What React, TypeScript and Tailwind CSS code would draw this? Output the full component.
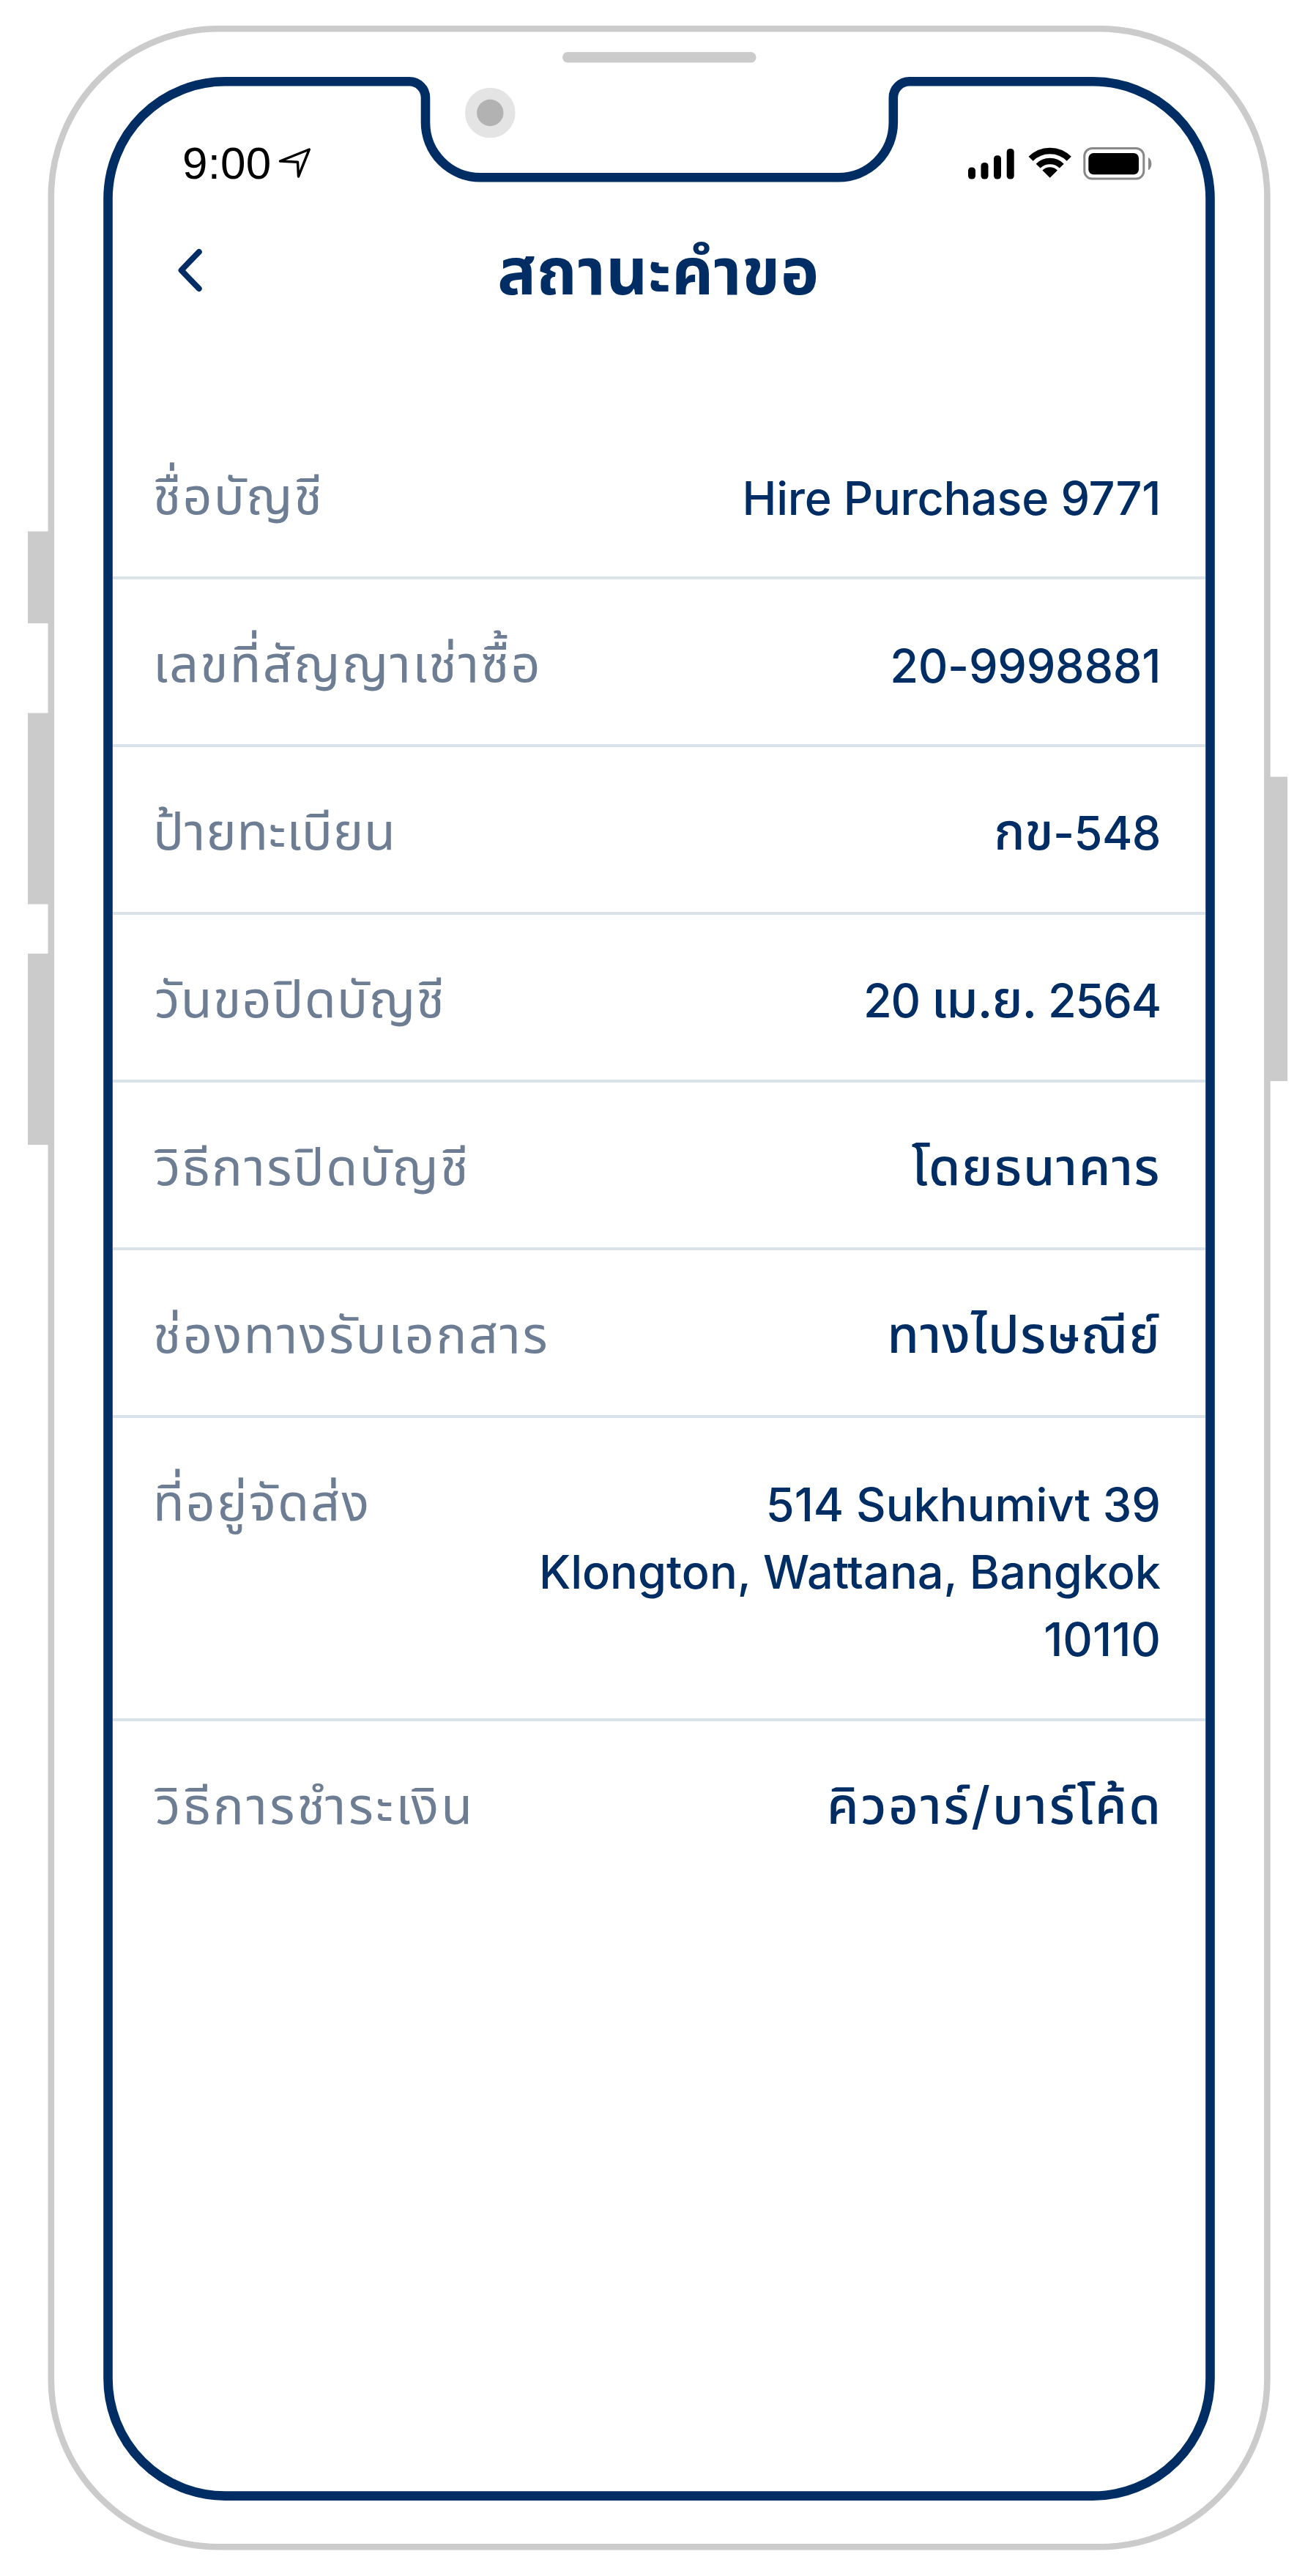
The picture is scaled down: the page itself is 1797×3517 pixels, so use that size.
import type { ReactNode } from "react";

type Row = { label: string; labelClass: string; value: ReactNode; valueClass: string; tall?: boolean };

const rows: Row[] = [
  { label: "ชื่อบัญชี", labelClass: "tracking-[2px]", value: "Hire Purchase 9771", valueClass: "relative top-px text-[63px] tracking-[-0.3px]" },
  { label: "เลขที่สัญญาเช่าซื้อ", labelClass: "tracking-[2.2px]", value: "20-9998881", valueClass: "relative top-px text-[63px] tracking-[-0.3px]" },
  {
    label: "ป้ายทะเบียน", labelClass: "tracking-[0.7px]",
    value: <><span className="text-[70px] leading-none">กข</span>-548</>, valueClass: "text-[63px] tracking-[-0.5px]",
  },
  {
    label: "วันขอปิดบัญชี", labelClass: "ml-[2px] tracking-[1.3px]",
    value: <>20 <span className="text-[70px] leading-none">เม.ย.</span> 2564</>, valueClass: "text-[63px] tracking-[-1.2px]",
  },
  { label: "วิธีการปิดบัญชี", labelClass: "ml-[3px] tracking-[2.3px]", value: "โดยธนาคาร", valueClass: "text-[70px] tracking-[1.6px]" },
  { label: "ช่องทางรับเอกสาร", labelClass: "tracking-[2.5px]", value: "ทางไปรษณีย์", valueClass: "text-[70px] tracking-[1.3px]" },
  {
    label: "ที่อยู่จัดส่ง", labelClass: "tracking-[2.1px]",
    value: <>514 Sukhumivt 39<br />Klongton, Wattana, Bangkok<br />10110</>, valueClass: "relative top-px text-[63px]", tall: true,
  },
  { label: "วิธีการชำระเงิน", labelClass: "ml-[3px] tracking-[3.3px]", value: "คิวอาร์/บาร์โค้ด", valueClass: "-mr-[3px] text-[70px] tracking-[2.9px]" },
];

function PhoneFrame() {
  return (
    <svg className="absolute inset-0" width="1797" height="3517" viewBox="0 0 1797 3517" fill="none">
      <g fill="#cbcbcb">
        <rect x="38" y="725.5" width="32" height="125.5" />
        <rect x="38" y="973.5" width="32" height="261" />
        <rect x="38" y="1302" width="32" height="261" />
        <rect x="1730" y="1060.5" width="28" height="415.5" />
        <rect x="768" y="71" width="264.5" height="14.5" rx="7.25" />
      </g>
      <rect x="69.8" y="39.3" width="1660.6" height="3438" rx="229" stroke="#cbcbcb" strokeWidth="8.6" />
      <circle cx="669.3" cy="154" r="34.3" fill="#e4e4e4" />
      <circle cx="669.3" cy="154" r="18.2" fill="#b2b2b2" />
      <path
        d="M307.5 111.3H559A22 22 0 0 1 581 133.3V167.3A75 75 0 0 0 656 242.3H1144.8A75 75 0 0 0 1219.8 167.3V133.3A22 22 0 0 1 1241.8 111.3H1492.5A160 160 0 0 1 1652.5 271.3V3247.6A160 160 0 0 1 1492.5 3407.6H307.5A160 160 0 0 1 147.5 3247.6V271.3A160 160 0 0 1 307.5 111.3Z"
        stroke="#002d64" strokeWidth="12.6"
      />
    </svg>
  );
}

function StatusBar() {
  return (
    <div className="flex h-[70px] items-center pl-[95px] pr-[73px]">
      <span className="w-[131px] font-['Liberation_Sans',Arial,sans-serif] text-[62px] leading-[70px] tracking-[0.2px] text-black">9:00</span>
      <svg width="46" height="46" viewBox="0 0 46 46" fill="none" stroke="#000" strokeWidth="3.4" strokeLinejoin="round">
        <path d="M42.3 4L2.5 20L26.5 21.2L27.5 41Z" />
      </svg>
      <svg className="ml-auto" width="65" height="46" viewBox="0 0 65 46">
        <rect x="1" y="28.5" width="10" height="16" rx="4.5" />
        <rect x="18.5" y="22" width="10" height="22.5" rx="4.5" />
        <rect x="36" y="12.3" width="10" height="32.2" rx="4.5" />
        <rect x="53.7" y="3" width="10" height="41.5" rx="4.5" />
      </svg>
      <svg className="ml-[17px]" width="61" height="46" viewBox="0 0 61 46" fill="none" stroke="#000">
        <path d="M4.6 16.8A36.8 36.8 0 0 1 56.8 16.8" strokeWidth="8.6" />
        <path d="M14.6 26.6A22.8 22.8 0 0 1 46.8 26.6" strokeWidth="8.4" />
        <path d="M20.4 32.6A14.3 14.3 0 0 1 41 32.6L30.7 42.8Z" fill="#000" stroke="none" />
      </svg>
      <svg className="ml-[14px]" width="95" height="46" viewBox="0 0 95 46">
        <rect x="2.8" y="2.5" width="81" height="41.6" rx="10.5" fill="none" stroke="#888" strokeWidth="3" />
        <rect x="8.3" y="9" width="68.7" height="29.3" rx="7" />
        <path d="M90 15C95.8 18 95.8 29.3 90 32.3Z" fill="#888" />
      </svg>
    </div>
  );
}

function Header() {
  return (
    <header className="mt-[62px] flex h-[100px] items-center text-[#002d64]">
      <button className="ml-[88px] -mr-[124px] -mt-[2px]">
        <svg width="34" height="60" viewBox="0 0 34 60" fill="none" stroke="currentColor" strokeWidth="8" strokeLinecap="round" strokeLinejoin="round">
          <path d="M29.7 5L5.6 30L29.7 55" />
        </svg>
      </button>
      <h1 className="flex-1 text-center text-[88px] font-bold leading-[100px] tracking-[0.7px]">สถานะคำขอ</h1>
    </header>
  );
}

export default function App() {
  return (
    <div className="relative h-[3517px] w-[1797px] bg-white font-['Inter','Noto_Sans_Thai','Noto_Sans',sans-serif]">
      <PhoneFrame />
      <div className="relative ml-[154px] flex w-[1492px] flex-col pt-[188px]">
        <StatusBar />
        <Header />
        <dl className="mt-[142px]">
          {rows.map((r) => (
            <div
              key={r.label}
              className={`flex items-baseline justify-between border-b-4 border-[#dbe3ea] pl-[55px] pr-[61px] pt-[69px] last:border-b-0 ${r.tall ? "h-[414px]" : "h-[229px]"}`}
            >
              <dt className={`whitespace-nowrap text-[70px] leading-[92px] text-[#6d7d93] ${r.labelClass}`}>{r.label}</dt>
              <dd className={`whitespace-nowrap text-right font-medium leading-[92px] text-[#002d64] ${r.valueClass}`}>{r.value}</dd>
            </div>
          ))}
        </dl>
      </div>
    </div>
  );
}
